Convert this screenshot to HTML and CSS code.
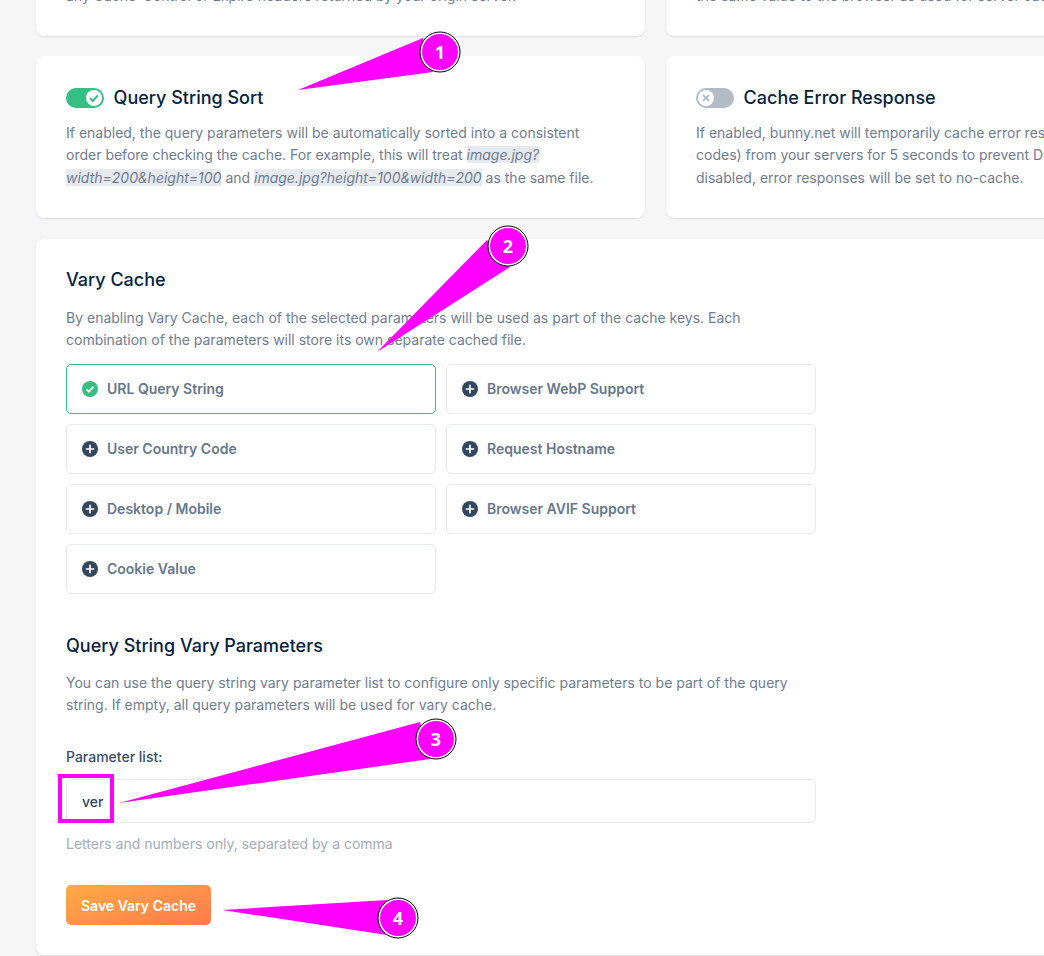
FILE: index.html
```html
<!DOCTYPE html>
<html lang="en">
<head>
    <meta charset="UTF-8">
    <meta name="viewport" content="width=device-width, initial-scale=1.0">
    <title>Cache settings</title>
    <link rel="stylesheet" href="styles.css">
</head>
<body>
    <div class="page">
        <div class="row row-cut">
            <div class="card card-cut"><p>any Cache-Control or Expire headers returned by your origin server.</p></div>
            <div class="card card-cut"><p>the same value to the browser as used for server cache.</p></div>
        </div>

        <div class="row">
            <div class="card">
                <div class="toggle-title">
                    <span class="toggle toggle-on">
                        <svg class="knob" viewBox="0 0 16 16"><circle cx="8" cy="8" r="8" fill="#fff"/><path d="M4 8.3l2.800 2.700 5-5.600" fill="none" stroke="#34bf83" stroke-width="2"/></svg>
                    </span>
                    <h3>Query String Sort</h3>
                </div>
                <p>If enabled, the query parameters will be automatically sorted into a consistent order before checking the cache. For example, this will treat <em>image.jpg?<wbr>width=200&amp;height=100</em> and <em>image.jpg?height=100&amp;width=200</em> as the same file.</p>
            </div>
            <div class="card">
                <div class="toggle-title">
                    <span class="toggle toggle-off">
                        <svg class="knob" viewBox="0 0 16 16"><circle cx="8" cy="8" r="8" fill="#fff"/><path d="M5 5l6 6M11 5l-6 6" fill="none" stroke="#b3bbc5" stroke-width="1.800"/></svg>
                    </span>
                    <h3>Cache Error Response</h3>
                </div>
                <p>If enabled, bunny.net will temporarily cache error responses (like 5XX status codes) from your servers for 5 seconds to prevent DDoS attacks on origin. If disabled, error responses will be set to no-cache.</p>
            </div>
        </div>

        <div class="card card-vary">
            <div class="vary-inner">
                <h3>Vary Cache</h3>
                <p class="intro">By enabling Vary Cache, each of the selected parameters will be used as part of the cache keys. Each combination of the parameters will store its own separate cached file.</p>
                <div class="options">
                    <div class="option option-active">
                        <svg class="ico" viewBox="0 0 16 16"><circle cx="8" cy="8" r="8" fill="#34bf83"/><path d="M4.400 8.300l2.500 2.400 4.600-5" fill="none" stroke="#fff" stroke-width="1.700"/></svg>
                        URL Query String
                    </div>
                    <div class="option">
                        <svg class="ico" viewBox="0 0 16 16"><circle cx="8" cy="8" r="8" fill="#33465f"/><path d="M8 3.800v8.400M3.800 8h8.400" fill="none" stroke="#fff" stroke-width="1.700"/></svg>
                        Browser WebP Support
                    </div>
                    <div class="option">
                        <svg class="ico" viewBox="0 0 16 16"><circle cx="8" cy="8" r="8" fill="#33465f"/><path d="M8 3.800v8.400M3.800 8h8.400" fill="none" stroke="#fff" stroke-width="1.700"/></svg>
                        User Country Code
                    </div>
                    <div class="option">
                        <svg class="ico" viewBox="0 0 16 16"><circle cx="8" cy="8" r="8" fill="#33465f"/><path d="M8 3.800v8.400M3.800 8h8.400" fill="none" stroke="#fff" stroke-width="1.700"/></svg>
                        Request Hostname
                    </div>
                    <div class="option">
                        <svg class="ico" viewBox="0 0 16 16"><circle cx="8" cy="8" r="8" fill="#33465f"/><path d="M8 3.800v8.400M3.800 8h8.400" fill="none" stroke="#fff" stroke-width="1.700"/></svg>
                        Desktop / Mobile
                    </div>
                    <div class="option">
                        <svg class="ico" viewBox="0 0 16 16"><circle cx="8" cy="8" r="8" fill="#33465f"/><path d="M8 3.800v8.400M3.800 8h8.400" fill="none" stroke="#fff" stroke-width="1.700"/></svg>
                        Browser AVIF Support
                    </div>
                    <div class="option">
                        <svg class="ico" viewBox="0 0 16 16"><circle cx="8" cy="8" r="8" fill="#33465f"/><path d="M8 3.800v8.400M3.800 8h8.400" fill="none" stroke="#fff" stroke-width="1.700"/></svg>
                        Cookie Value
                    </div>
                </div>

                <h3 class="sub-title">Query String Vary Parameters</h3>
                <p class="sub-intro">You can use the query string vary parameter list to configure only specific parameters to be part of the query string. If empty, all query parameters will be used for vary cache.</p>

                <label class="field-label" for="params">Parameter list:</label>
                <input class="field" id="params" type="text" value="ver">
                <div class="hint">Letters and numbers only, separated by a comma</div>

                <button class="save-btn">Save Vary Cache</button>
            </div>
        </div>
    </div>

    <!-- annotations drawn on top of the screenshot -->
    <svg class="marks" width="1044" height="956" viewBox="0 0 1044 956">
        <g fill="#ff00ff">
            <polygon points="298,90 423,38 433,72"/>
            <polygon points="377,352 487,240 510,267"/>
            <polygon points="119,803 420,722 430,759"/>
            <polygon points="222,910 387,900 387,935"/>
        </g>
        <rect class="mark-box" x="60" y="776" width="52" height="45"/>
        <g class="bubble"><circle class="ring" cx="440" cy="52" r="20"/><circle cx="440" cy="52" r="18"/><text x="440" y="58.500">1</text></g>
        <g class="bubble"><circle class="ring" cx="508" cy="246" r="20"/><circle cx="508" cy="246" r="18"/><text x="508" y="252.500">2</text></g>
        <g class="bubble"><circle class="ring" cx="436" cy="739" r="20"/><circle cx="436" cy="739" r="18"/><text x="436" y="745.500">3</text></g>
        <g class="bubble"><circle class="ring" cx="398" cy="918" r="20"/><circle cx="398" cy="918" r="18"/><text x="398" y="924.500">4</text></g>
    </svg>
</body>
</html>
```

FILE: styles.css
```css
html, body{
    margin: 0;
    height: 956px;
    overflow: hidden;
}
body{
    position: relative;
    background: #f6f6f6;
    font-family: Inter, "Liberation Sans", sans-serif;
    font-size: 14px;
    line-height: 22.4px;
    color: #6f7d90;
}
.page{
    display: flex;
    flex-direction: column;
    gap: 20px;
    width: 1239px;
    margin-left: 36px;
    margin-top: -126px;
}
.row{
    display: grid;
    grid-template-columns: 609px 609px;
    gap: 21px;
}
.card{
    background: #fff;
    border-radius: 8px;
    box-shadow: 0 1px 2px rgba(20, 40, 70, 0.13);
    padding: 30px 30px 29px;
    box-sizing: border-box;
    height: 162px;
}
.card p{
    margin: 0;
}
.card-cut{
    display: flex;
    align-items: flex-end;
    padding-bottom: 29px;
}
.toggle-title{
    display: flex;
    align-items: center;
    gap: 9.600px;
    height: 24px;
    margin-bottom: 12px;
}
h3{
    margin: 0;
    font-size: 18px;
    line-height: 24px;
    font-weight: 500;
    color: #04223f;
}
.toggle{
    display: flex;
    align-items: center;
    width: 38px;
    height: 20px;
    border-radius: 10px;
    padding: 2px;
    box-sizing: border-box;
}
.toggle-on{
    background: #34bf83;
    justify-content: flex-end;
}
.toggle-off{
    background: #b3bbc5;
}
.knob{
    width: 16px;
    height: 16px;
}
em{
    background: #e6e9ee;
    font-style: italic;
}

.card-vary{
    height: 716px;
    margin-top: 1px;
    padding-top: 29px;
}
.vary-inner{
    width: 750px;
}
.card .intro{
    margin-top: 15px;
}
.card .sub-intro{
    margin-top: 14px;
}
.options{
    display: grid;
    grid-template-columns: 370px 370px;
    grid-auto-rows: 50px;
    gap: 10px;
    margin-top: 12.200px;
}
.option{
    display: flex;
    align-items: center;
    gap: 9px;
    padding-left: 15px;
    border: 1px solid #e6e9ed;
    border-radius: 5px;
    box-sizing: border-box;
    font-weight: 600;
    color: #67778b;
}
.option-active{
    border-color: #34bf83;
}
.ico{
    width: 16px;
    height: 16px;
}
.sub-title{
    margin-top: 40px;
}
.field-label{
    display: block;
    margin-top: 29px;
    font-weight: 500;
    color: #3a4c64;
}
.field{
    display: block;
    width: 100%;
    height: 44px;
    margin-top: 10.800px;
    padding: 0 15px;
    border: 1px solid #e6e9ed;
    border-radius: 5px;
    box-sizing: border-box;
    background: #fff;
    font-family: Inter, "Liberation Sans", sans-serif;
    font-size: 14px;
    font-weight: 500;
    color: #33465f;
}
.hint{
    margin-top: 9.800px;
    color: #a3adb9;
}
.save-btn{
    display: block;
    width: 145px;
    height: 40px;
    margin-top: 29.800px;
    border: 0;
    border-radius: 5px;
    background: linear-gradient(160deg, #fdab45, #fe7a4d);
    font-family: Inter, "Liberation Sans", sans-serif;
    font-size: 14px;
    font-weight: 600;
    color: #fff;
}

.marks{
    position: absolute;
    left: 0;
    top: 0;
}
.mark-box{
    fill: none;
    stroke: #ff00ff;
    stroke-width: 4;
}
.bubble circle{
    fill: #ff00ff;
}
.bubble .ring{
    fill: #fff;
    stroke: #000;
    stroke-width: 1;
}
.bubble text{
    font-family: "Open Sans", sans-serif;
    font-size: 18px;
    font-weight: 700;
    fill: #fff;
    text-anchor: middle;
}
```
